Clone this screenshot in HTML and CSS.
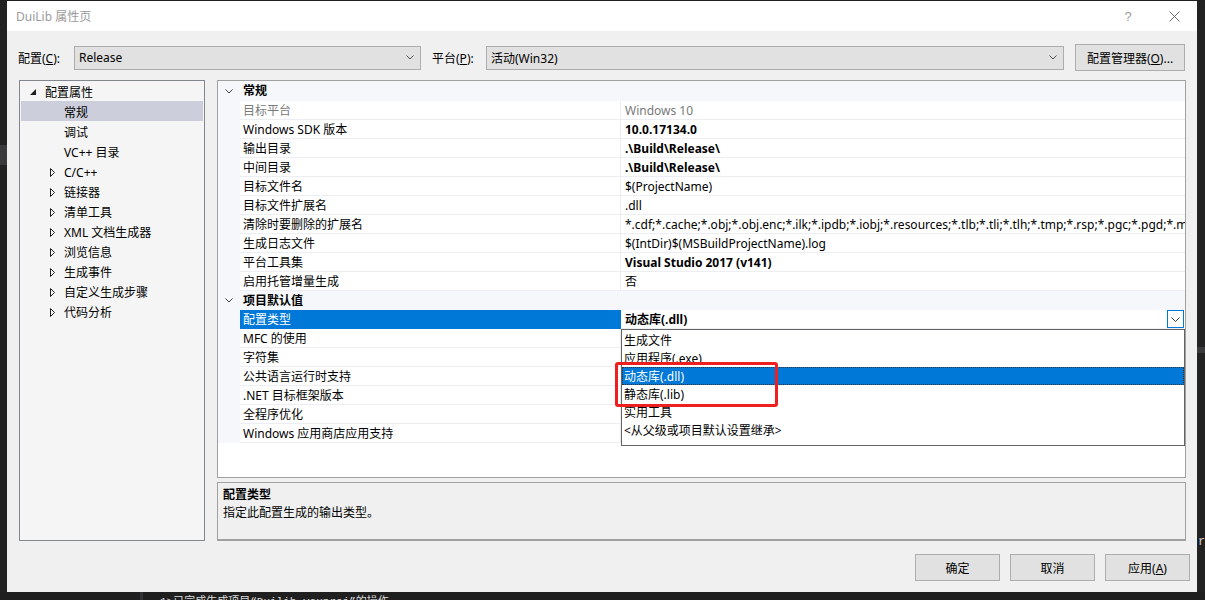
FILE: index.html
```html
<!DOCTYPE html>
<html lang="zh-CN">
<head>
<meta charset="utf-8">
<title>DuiLib 属性页</title>
<link rel="stylesheet" href="styles.css">
</head>
<body>
<div class="screen">
  <div class="desk-row">
    <div class="edge edge-left"><div class="edge-band"></div></div>
    <div class="window">
      <div class="titlebar">
        <span class="title">DuiLib 属性页</span>
        <span class="cap-btn cap-help">?</span>
        <span class="cap-btn cap-close"><svg width="11" height="11" viewBox="0 0 11 11"><path d="M0.5 0.5 L10.5 10.5 M10.5 0.5 L0.5 10.5" stroke="#6f6f6f" stroke-width="1" fill="none"/></svg></span>
      </div>

      <div class="config-row">
        <span class="cfg-label">配置(<u>C</u>):</span>
        <div class="combo combo-config"><span>Release</span><svg class="combo-arrow" width="8" height="5" viewBox="0 0 8 5"><path d="M0.5 0.5 L4 4 L7.5 0.5" stroke="#505050" fill="none"/></svg></div>
        <span class="cfg-label cfg-label-platform">平台(<u>P</u>):</span>
        <div class="combo combo-platform"><span>活动(Win32)</span><svg class="combo-arrow" width="8" height="5" viewBox="0 0 8 5"><path d="M0.5 0.5 L4 4 L7.5 0.5" stroke="#505050" fill="none"/></svg></div>
        <button class="btn btn-manager">配置管理器(<u>O</u>)...</button>
      </div>

      <div class="main">
        <div class="tree">
          <div class="tree-row lvl0"><span class="exp"><svg width="6" height="6" viewBox="0 0 6 6"><path d="M6 0 L6 6 L0 6 Z" fill="#1e1e1e"/></svg></span><span>配置属性</span></div>
          <div class="tree-row lvl1 selected"><span class="exp"></span><span>常规</span></div>
          <div class="tree-row lvl1"><span class="exp"></span><span>调试</span></div>
          <div class="tree-row lvl1"><span class="exp"></span><span>VC++ 目录</span></div>
          <div class="tree-row lvl1"><span class="exp"><svg class="tri" width="5" height="9" viewBox="0 0 5 9"><path d="M0.5 0.5 L4.5 4.5 L0.5 8.5 Z" stroke="#1e1e1e" fill="none"/></svg></span><span>C/C++</span></div>
          <div class="tree-row lvl1"><span class="exp"><svg class="tri" width="5" height="9" viewBox="0 0 5 9"><path d="M0.5 0.5 L4.5 4.5 L0.5 8.5 Z" stroke="#1e1e1e" fill="none"/></svg></span><span>链接器</span></div>
          <div class="tree-row lvl1"><span class="exp"><svg class="tri" width="5" height="9" viewBox="0 0 5 9"><path d="M0.5 0.5 L4.5 4.5 L0.5 8.5 Z" stroke="#1e1e1e" fill="none"/></svg></span><span>清单工具</span></div>
          <div class="tree-row lvl1"><span class="exp"><svg class="tri" width="5" height="9" viewBox="0 0 5 9"><path d="M0.5 0.5 L4.5 4.5 L0.5 8.5 Z" stroke="#1e1e1e" fill="none"/></svg></span><span>XML 文档生成器</span></div>
          <div class="tree-row lvl1"><span class="exp"><svg class="tri" width="5" height="9" viewBox="0 0 5 9"><path d="M0.5 0.5 L4.5 4.5 L0.5 8.5 Z" stroke="#1e1e1e" fill="none"/></svg></span><span>浏览信息</span></div>
          <div class="tree-row lvl1"><span class="exp"><svg class="tri" width="5" height="9" viewBox="0 0 5 9"><path d="M0.5 0.5 L4.5 4.5 L0.5 8.5 Z" stroke="#1e1e1e" fill="none"/></svg></span><span>生成事件</span></div>
          <div class="tree-row lvl1"><span class="exp"><svg class="tri" width="5" height="9" viewBox="0 0 5 9"><path d="M0.5 0.5 L4.5 4.5 L0.5 8.5 Z" stroke="#1e1e1e" fill="none"/></svg></span><span>自定义生成步骤</span></div>
          <div class="tree-row lvl1"><span class="exp"><svg class="tri" width="5" height="9" viewBox="0 0 5 9"><path d="M0.5 0.5 L4.5 4.5 L0.5 8.5 Z" stroke="#1e1e1e" fill="none"/></svg></span><span>代码分析</span></div>
        </div>

        <div class="right-col">
          <div class="grid">
            <div class="pg-row pg-cat pg-cat-first"><span class="pg-gutter"><svg width="8" height="5" viewBox="0 0 8 5"><path d="M0.5 0.5 L4 4 L7.5 0.5" stroke="#404040" fill="none"/></svg></span><span class="pg-cat-name">常规</span></div>
            <div class="pg-row"><span class="pg-gutter"></span><span class="pg-name dim">目标平台</span><span class="pg-value dim">Windows 10</span></div>
            <div class="pg-row"><span class="pg-gutter"></span><span class="pg-name">Windows SDK 版本</span><span class="pg-value bold">10.0.17134.0</span></div>
            <div class="pg-row"><span class="pg-gutter"></span><span class="pg-name">输出目录</span><span class="pg-value bold">.\Build\Release\</span></div>
            <div class="pg-row"><span class="pg-gutter"></span><span class="pg-name">中间目录</span><span class="pg-value bold">.\Build\Release\</span></div>
            <div class="pg-row"><span class="pg-gutter"></span><span class="pg-name">目标文件名</span><span class="pg-value">$(ProjectName)</span></div>
            <div class="pg-row"><span class="pg-gutter"></span><span class="pg-name">目标文件扩展名</span><span class="pg-value">.dll</span></div>
            <div class="pg-row"><span class="pg-gutter"></span><span class="pg-name">清除时要删除的扩展名</span><span class="pg-value">*.cdf;*.cache;*.obj;*.obj.enc;*.ilk;*.ipdb;*.iobj;*.resources;*.tlb;*.tli;*.tlh;*.tmp;*.rsp;*.pgc;*.pgd;*.meta;*.tlog;*.manifest;*.res;*.pch;*.exp;*.idb</span></div>
            <div class="pg-row"><span class="pg-gutter"></span><span class="pg-name">生成日志文件</span><span class="pg-value">$(IntDir)$(MSBuildProjectName).log</span></div>
            <div class="pg-row"><span class="pg-gutter"></span><span class="pg-name">平台工具集</span><span class="pg-value bold">Visual Studio 2017 (v141)</span></div>
            <div class="pg-row"><span class="pg-gutter"></span><span class="pg-name">启用托管增量生成</span><span class="pg-value">否</span></div>
            <div class="pg-row pg-cat"><span class="pg-gutter"><svg width="8" height="5" viewBox="0 0 8 5"><path d="M0.5 0.5 L4 4 L7.5 0.5" stroke="#404040" fill="none"/></svg></span><span class="pg-cat-name">项目默认值</span></div>
            <div class="pg-row pg-selected"><span class="pg-gutter"></span><span class="pg-name">配置类型</span><span class="pg-value bold">动态库(.dll)<span class="dd-btn"><svg width="9" height="5" viewBox="0 0 9 5"><path d="M0.5 0.5 L4.5 4.5 L8.5 0.5" stroke="#333" fill="none"/></svg></span></span></div>
            <div class="pg-row"><span class="pg-gutter"></span><span class="pg-name">MFC 的使用</span><span class="pg-value"></span></div>
            <div class="pg-row"><span class="pg-gutter"></span><span class="pg-name">字符集</span><span class="pg-value"></span></div>
            <div class="pg-row"><span class="pg-gutter"></span><span class="pg-name">公共语言运行时支持</span><span class="pg-value"></span></div>
            <div class="pg-row"><span class="pg-gutter"></span><span class="pg-name">.NET 目标框架版本</span><span class="pg-value"></span></div>
            <div class="pg-row"><span class="pg-gutter"></span><span class="pg-name">全程序优化</span><span class="pg-value"></span></div>
            <div class="pg-row"><span class="pg-gutter"></span><span class="pg-name">Windows 应用商店应用支持</span><span class="pg-value"></span></div>

            <div class="dropdown">
              <div class="dd-item">生成文件</div>
              <div class="dd-item">应用程序(.exe)</div>
              <div class="dd-item sel">动态库(.dll)</div>
              <div class="dd-item">静态库(.lib)</div>
              <div class="dd-item">实用工具</div>
              <div class="dd-item">&lt;从父级或项目默认设置继承&gt;</div>
            </div>
            <div class="red-mark"></div>
          </div>
          <div class="desc">
            <div class="desc-title">配置类型</div>
            <div class="desc-text">指定此配置生成的输出类型。</div>
          </div>
        </div>
      </div>

      <div class="button-row">
        <button class="btn btn-dlg">确定</button>
        <button class="btn btn-dlg">取消</button>
        <button class="btn btn-dlg">应用(<u>A</u>)</button>
      </div>
    </div>
    <div class="edge edge-right">
      <div class="edge-band edge-band-r"></div>
      <div class="edge-char">r</div>
    </div>
  </div>
  <div class="output-strip">
    <div class="out-gutter"></div>
    <div class="out-bar"></div>
    <div class="out-text">1&gt;已完成生成项目“Duilib.vcxproj”的操作。</div>
  </div>
</div>
</body>
</html>
```

FILE: styles.css
```css
* { box-sizing: border-box; }
html, body { margin: 0; padding: 0; }
body {
  background: #1f1f1f;
  width: 1205px;
  height: 600px;
  overflow: hidden;
  font-family: "Noto Sans", "Noto Sans CJK SC", sans-serif;
  font-size: 12px;
  color: #000;
}
.screen { width: 1205px; height: 600px; display: flex; flex-direction: column; }
.desk-row { display: flex; height: 592px; padding-top: 1px; flex: none; }

.edge { flex: none; background: #222222; position: relative; }
.edge-left { width: 7px; padding-top: 144px; }
.edge-band { height: 20px; background: #3a3a3c; }
.edge-right { width: 8px; padding-top: 346px; }
.edge-band-r { height: 6px; background: #3a3a3c; }
.edge-char { margin-top: 182px; color: #d0d0d0; font-family: "Liberation Mono", monospace; font-size: 12px; line-height: 14px; padding-left: 1px; }

.window {
  width: 1190px;
  height: 591px;
  background: #f0f0f0;
  display: flex;
  flex-direction: column;
  flex: none;
}

/* title bar */
.titlebar { height: 30px; background: #fff; display: flex; align-items: center; flex: none; }
.title { flex: 1; padding-left: 9px; color: #9a9a9a; font-size: 12px; }
.cap-btn { width: 46px; height: 30px; display: flex; align-items: center; justify-content: center; }
.cap-help { color: #9a9a9a; font-size: 13px; font-family: "Liberation Sans", sans-serif; }

/* configuration row */
.config-row { display: flex; align-items: center; height: 27px; margin-top: 13px; padding-left: 11px; flex: none; }
.cfg-label { width: 56px; }
.cfg-label-platform { width: 54px; margin-left: 11px; }
.combo {
  height: 24px;
  background: #e1e1e1;
  border: 1px solid #adadad;
  display: flex;
  align-items: center;
  justify-content: space-between;
  padding: 0 4px 0 4px;
}
.combo-config { width: 347px; }
.combo-platform { width: 578px; }
.combo-arrow { margin-right: 2px; }
.btn {
  font-family: inherit;
  font-size: 12px;
  color: #000;
  background: #e1e1e1;
  border: 1px solid #adadad;
  padding: 0;
  margin: 0;
}
.btn-manager { width: 110px; height: 27px; margin-left: 11px; }

/* main area */
.main { display: flex; margin-top: 9px; padding-left: 12px; height: 461px; flex: none; gap: 12px; }
.tree { width: 186px; height: 461px; border: 1px solid #828790; background: #f5f5f5; padding: 0 1px; }
.tree-row { display: flex; align-items: center; height: 20px; padding-top: 2px; white-space: nowrap; }
.tree-row.lvl0 { padding-left: 9px; }
.tree-row.lvl1 { padding-left: 28px; }
.tree-row.selected { background: #cccedb; }
.exp { width: 15px; display: flex; align-items: center; height: 18px; }
.tree-row.lvl0 .exp { padding-top: 0; }
.tri { margin-left: 1px; margin-top: 1px; }

.right-col { width: 969px; display: flex; flex-direction: column; gap: 4px; }
.grid { position: relative; height: 398px; border: 1px solid #a0a0a0; background: #fff; overflow: hidden; }
.pg-row { display: flex; height: 19px; }
.pg-gutter { width: 22px; flex: none; background: #f5f7fa; display: flex; align-items: center; padding-left: 7px; }
.pg-name {
  width: 381px; flex: none;
  border-bottom: 1px solid #eceef3;
  border-right: 1px solid #eceef3;
  padding-left: 3px;
  line-height: 20px;
  white-space: nowrap;
  overflow: hidden;
}
.pg-value {
  flex: 1;
  position: relative;
  border-bottom: 1px solid #eceef3;
  padding-left: 4px;
  line-height: 20px;
  white-space: nowrap;
  overflow: hidden;
}
.dim { color: #7a7a7a; }
.bold { font-weight: 700; }
.pg-cat { background: #f5f7fa; }
.pg-cat-first { height: 20px; }
.pg-cat-name { padding-left: 3px; font-weight: 700; line-height: 20px; }
.pg-selected .pg-name { background: #0078d7; color: #fff; border-bottom-color: #0078d7; border-right-color: #0078d7; }
.dd-btn {
  position: absolute;
  right: 1px;
  top: 0;
  width: 17px;
  height: 18px;
  border: 1px solid #0078d7;
  background: #fff;
  display: flex;
  align-items: center;
  justify-content: center;
}

.dropdown {
  position: absolute;
  left: 403px;
  top: 248px;
  width: 564px;
  height: 117px;
  border: 1px solid #646464;
  background: #fff;
  padding-top: 1px;
}
.dd-item { height: 18px; line-height: 20px; padding-left: 2px; white-space: nowrap; overflow: hidden; }
.dd-item.sel { background: #0078d7; color: #fff; outline: 1px dotted #333; outline-offset: -1px; }
.red-mark {
  position: absolute;
  left: 397px;
  top: 281px;
  width: 163px;
  height: 45px;
  border: 3px solid #ee1f1f;
  border-radius: 3px;
}

.desc { height: 59px; border: 1px solid #a0a0a0; border-bottom-width: 2px; background: #f0f0f0; padding: 3px 5px 0; }
.desc-title { font-weight: 700; line-height: 18px; }
.desc-text { line-height: 18px; }

/* bottom buttons */
.button-row { display: flex; justify-content: flex-end; gap: 10px; padding-right: 7px; margin-top: 13px; flex: none; }
.btn-dlg { width: 85px; height: 27px; }

/* output strip below the dialog */
.output-strip { display: flex; height: 8px; overflow: hidden; background: #1f1f1f; flex: none; }
.out-gutter { width: 140px; flex: none; }
.out-bar { width: 3px; background: #333337; flex: none; }
.out-text {
  margin-left: 17px;
  color: #dcdcdc;
  font-family: "Liberation Mono", "Noto Sans CJK SC", monospace;
  font-size: 11px;
  line-height: 14px;
  white-space: nowrap;
  margin-top: 3px;
}
```
